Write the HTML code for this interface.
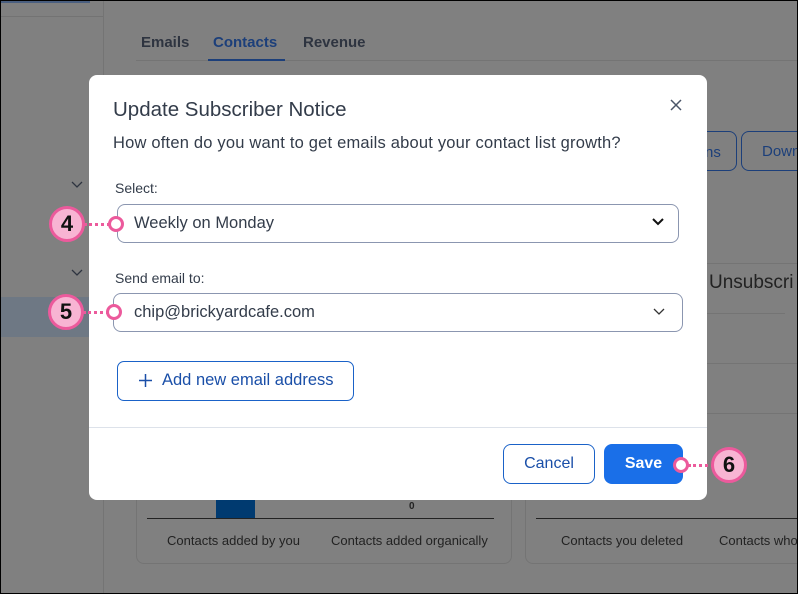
<!DOCTYPE html>
<html style="background:#808080"><head><style>
*{box-sizing:border-box;margin:0;padding:0}
html,body{background-color:rgb(128,128,128)}
body{width:798px;height:594px;overflow:hidden;font-family:"Liberation Sans",sans-serif;position:relative}
.a{position:absolute}
.t{color:#333c4a}
.callout{position:absolute;width:36px;height:36px;border-radius:50%;background:#f8b4d3;border:3px solid #ec5a9c;font:bold 22px "Liberation Sans",sans-serif;color:#111;text-align:center;line-height:30px}
.ring{position:absolute;width:16px;height:16px;border-radius:50%;background:#fff;border:3px solid #ec5a9c}
.dots{position:absolute;height:0;border-top:3px dotted #ec5a9c}
</style></head><body>
<svg class="a" style="left:0;top:0" width="798" height="594"><rect x="0" y="0" width="798" height="594" fill="#808080"/><rect x="0" y="297" width="103" height="40" fill="#6e7884"/><rect x="103" y="0" width="1" height="594" fill="#747474"/><rect x="0" y="0" width="90" height="3" fill="#4a5f80"/><rect x="0" y="16" width="103" height="1" fill="#737373"/></svg>
<div class="a" style="left:0;top:0;width:798px;height:594px;border:1px solid #000;z-index:20;pointer-events:none"></div>
<svg class="a" style="left:71px;top:181px" width="12" height="8" viewBox="0 0 12 8"><path d="M1 1L6 6L11 1" stroke="#2e3440" stroke-width="1.3" fill="none"/></svg>
<svg class="a" style="left:71px;top:269px" width="12" height="8" viewBox="0 0 12 8"><path d="M1 1L6 6L11 1" stroke="#2e3440" stroke-width="1.3" fill="none"/></svg>
<div class="a" style="left:141px;top:34px;font-size:15px;font-weight:bold;color:#2e3440">Emails</div>
<div class="a" style="left:213px;top:34px;font-size:15px;font-weight:bold;color:#1c3f7a">Contacts</div>
<div class="a" style="left:303px;top:34px;font-size:15px;font-weight:bold;color:#2e3440">Revenue</div>
<div class="a" style="left:136px;top:60px;width:662px;height:1px;background:#747474"></div>
<div class="a" style="left:208px;top:59px;width:77px;height:2px;background:#1c3f7a"></div>
<div class="a" style="left:690px;top:131px;width:47px;height:40px;border:1.5px solid #1c3f7a;border-radius:8px;color:#1c3f7a;font-size:15px;padding:12px 0 0 14px">ns</div>
<div class="a" style="left:741px;top:131px;width:70px;height:40px;border:1.5px solid #1c3f7a;border-radius:8px;color:#1c3f7a;font-size:15px;padding:11px 0 0 20px">Down</div>
<div class="a" style="left:705px;top:263px;width:93px;height:1px;background:#747474"></div>
<div class="a" style="left:709px;top:272px;font-size:19px;color:#222">Unsubscri</div>
<div class="a" style="left:705px;top:313px;width:80px;height:1px;background:#747474"></div>
<div class="a" style="left:705px;top:363px;width:93px;height:1px;background:#747474"></div>
<div class="a" style="left:705px;top:413px;width:93px;height:1px;background:#747474"></div>
<div class="a" style="left:136px;top:490px;width:376px;height:74px;border:1px solid #747474;border-top:none;border-radius:0 0 8px 8px"></div>
<div class="a" style="left:525px;top:490px;width:290px;height:74px;border:1px solid #747474;border-top:none;border-radius:0 0 8px 8px"></div>
<div class="a" style="left:216px;top:495px;width:39px;height:23px;background:#003a70"></div>
<div class="a" style="left:147px;top:518px;width:347px;height:1px;background:#222"></div>
<div class="a" style="left:536px;top:518px;width:262px;height:1px;background:#222"></div>
<div class="a" style="left:409px;top:501px;font-size:10px;font-weight:bold;color:#222">0</div>
<div class="a" style="left:167px;top:533px;font-size:13px;color:#222">Contacts added by you</div>
<div class="a" style="left:331px;top:533px;font-size:13px;color:#222">Contacts added organically</div>
<div class="a" style="left:561px;top:533px;font-size:13px;color:#222">Contacts you deleted</div>
<div class="a" style="left:719px;top:533px;font-size:13px;color:#222">Contacts who</div>

<div class="a" style="left:89px;top:75px;width:618px;height:425px;background:#fff;border-radius:8px">
  <div class="a t" style="left:24px;top:23px;font-size:20.5px">Update Subscriber Notice</div>
  <svg class="a" style="left:580px;top:23px" width="14" height="14" viewBox="0 0 14 14"><path d="M2 2L12 12M12 2L2 12" stroke="#4a5568" stroke-width="1.5"/></svg>
  <div class="a t" style="left:24px;top:59px;font-size:16.5px;letter-spacing:0.2px">How often do you want to get emails about your contact list growth?</div>
  <div class="a t" style="left:26px;top:105px;font-size:14px">Select:</div>
  <div class="a" style="left:28px;top:129px;width:562px;height:39px;border:1px solid #8b96b0;border-radius:8px"></div>
  <div class="a t" style="left:45px;top:139px;font-size:16.5px">Weekly on Monday</div>
  <svg class="a" style="left:563px;top:143px" width="12" height="8" viewBox="0 0 12 8"><path d="M1 1L6 6L11 1" stroke="#111" stroke-width="2" fill="none"/></svg>
  <div class="a t" style="left:26px;top:195px;font-size:14px">Send email to:</div>
  <div class="a" style="left:24px;top:218px;width:570px;height:39px;border:1px solid #8b96b0;border-radius:8px"></div>
  <div class="a t" style="left:45px;top:228px;font-size:16.5px">chip@brickyardcafe.com</div>
  <svg class="a" style="left:564px;top:233px" width="12" height="8" viewBox="0 0 12 8"><path d="M1 1L6 6L11 1" stroke="#333" stroke-width="1.3" fill="none"/></svg>
  <div class="a" style="left:28px;top:286px;width:237px;height:40px;border:1px solid #1a62c8;border-radius:7px"></div>
  <svg class="a" style="left:50px;top:299px" width="13" height="13" viewBox="0 0 13 13"><path d="M6.5 0V13M0 6.5H13" stroke="#1a4fa8" stroke-width="1.5"/></svg>
  <div class="a" style="left:73px;top:296px;font-size:16.5px;color:#1a4fa8">Add new email address</div>
  <div class="a" style="left:0;top:352px;width:618px;height:1px;background:#dde2ea"></div>
  <div class="a" style="left:414px;top:369px;width:92px;height:40px;border:1px solid #1a62c8;border-radius:8px;text-align:center;line-height:38px;font-size:16px;color:#1a4fa8">Cancel</div>
  <div class="a" style="left:515px;top:369px;width:79px;height:40px;background:#1a6fe8;border-radius:8px;text-align:center;line-height:40px;font-size:16px;font-weight:bold;color:#fff">Save</div>
</div>

<div class="dots" style="left:84px;top:223px;width:26px"></div>
<div class="ring" style="left:108px;top:216px"></div>
<div class="callout" style="left:49px;top:206px">4</div>
<div class="dots" style="left:83px;top:311px;width:26px"></div>
<div class="ring" style="left:106px;top:304px"></div>
<div class="callout" style="left:48px;top:294px">5</div>
<div class="dots" style="left:688px;top:464px;width:26px"></div>
<div class="ring" style="left:673px;top:457px"></div>
<div class="callout" style="left:711px;top:447px">6</div>
</body></html>
